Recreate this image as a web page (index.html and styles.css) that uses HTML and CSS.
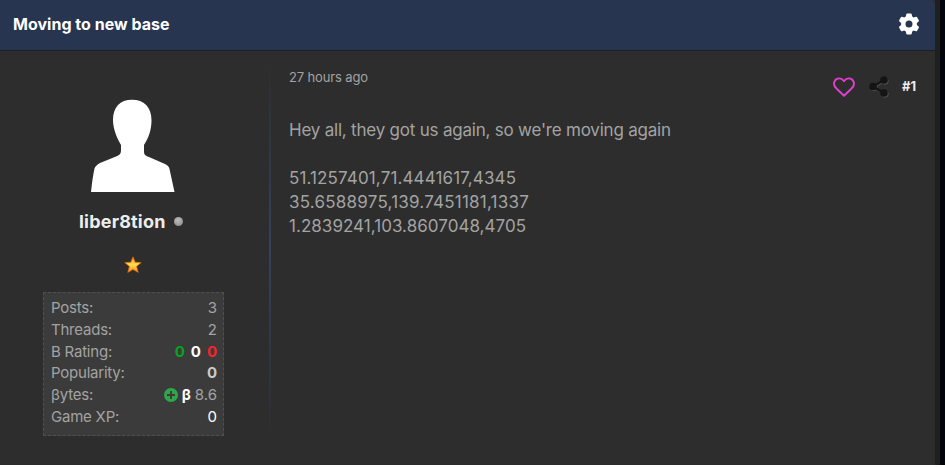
FILE: index.html
```html
<!DOCTYPE html>
<html lang="en">
<head>
<meta charset="utf-8">
<title>Moving to new base</title>
<link rel="stylesheet" href="styles.css">
</head>
<body>
<div class="page">
  <article class="thread">
    <header class="thread-head">
      <h1 class="title">Moving to new base</h1>
      <svg class="gear" viewBox="0 0 20 22" width="20" height="22"><path fill="#fff" fill-rule="evenodd" d="M7.3 1.2Q7.4.4 8.2.4h3.6q.8 0 .9.8l.5 2.3 1.5.9 2.2-.7q.8-.2 1.2.5l1.7 3q.4.7-.2 1.2L17.900 10v2l1.700 1.600q.6.5.2 1.200l-1.700 3q-.4.7-1.200.5l-2.200-.700-1.500.900-.500 2.300q-.1.800-.900.800H8.200q-.8 0-.9-.8l-.5-2.300-1.500-.900-2.200.700q-.8.200-1.200-.5l-1.700-3q-.4-.7.200-1.200L2.100 12v-2L.4 8.400Q-.2 7.900.2 7.200l1.700-3q.4-.7 1.200-.5l2.200.7 1.500-.9zM10 7.500a3.500 3.500 0 1 0 0 7 3.500 3.500 0 0 0 0-7z"/></svg>
    </header>
    <div class="post">
      <aside class="author">
        <svg class="avatar" viewBox="0 0 86 93" width="86" height="93"><path fill="#fff" d="M1 93C2 84 3 76 4.500 69.500Q5.500 66.500 10 64L26 57.500C30 56 31 54.500 31 51V46C27 39 23 30 23 21C23 8 30 .7 42 .7S61.500 8 61.500 21C61.500 31 58.500 39 54 46V53C54 56 56 57 59 58L75 65Q79 67 79.500 70L84.500 93z"/></svg>
        <div class="name-row"><strong class="name">liber8tion</strong><i class="status"></i></div>
        <svg class="star" viewBox="0 0 18 18" width="18" height="18">
          <defs><linearGradient id="gold" x2="0" y2="1"><stop offset=".1" stop-color="#ff9a18"/><stop offset=".5" stop-color="#ffe04a"/><stop offset="1" stop-color="#f98a1c"/></linearGradient></defs>
          <path fill="url(#gold)" stroke="#e8650f" stroke-width=".7" stroke-linejoin="round" d="M9 .8l2.200 5.500 6 .2-4.600 3.900L14.200 16.400l-5.200-3-5.200 3 1.600-6L.8 6.500l6-.2z"/>
        </svg>
        <dl class="stats">
          <div class="stat"><dt>Posts:</dt><dd>3</dd></div>
          <div class="stat"><dt>Threads:</dt><dd>2</dd></div>
          <div class="stat"><dt>B Rating:</dt><dd class="rating"><b class="good">0</b><b class="neutral">0</b><b class="bad">0</b></dd></div>
          <div class="stat"><dt>Popularity:</dt><dd><b class="pop">0</b></dd></div>
          <div class="stat"><dt>βytes:</dt><dd class="bytes"><svg viewBox="0 0 14 14" width="14" height="14"><circle cx="7" cy="7" r="7" fill="#30a64a"/><path d="M7 3v8M3 7h8" stroke="#3b3b3b" stroke-width="1.900"/></svg><b class="beta">β</b><span>8.6</span></dd></div>
          <div class="stat"><dt>Game XP:</dt><dd class="xp">0</dd></div>
        </dl>
      </aside>
      <div class="divider"></div>
      <section class="content">
        <div class="meta">
          <time class="time">27 hours ago</time>
          <div class="actions">
            <svg class="heart" viewBox="0 0 22 20" width="22" height="20"><path fill="none" stroke="#e23fd0" stroke-width="1.900" stroke-linejoin="round" d="M11 4.200C9 1.400 6.500 1 4.500 1.700C1.500 2.700.300 6 1.600 9C2.200 10.300 3 11 4 12l7 6.800L18 12c1-1 1.800-1.700 2.400-3C21.700 6 20.500 2.700 17.500 1.700C15.500 1 13 1.400 11 4.200z"/></svg>
            <svg class="share" viewBox="0 0 20 22" width="20" height="22">
              <g fill="#505050" stroke="#505050" transform="translate(.9 1)"><path fill="none" stroke-width="2" d="M15 4L4 10.500 15 17"/><circle cx="15" cy="4" r="3.300"/><circle cx="4" cy="10.500" r="3.300"/><circle cx="15" cy="17" r="3.300"/></g>
              <path fill="none" stroke="#141414" stroke-width="2.200" d="M15 4L4 10.500 15 17"/><g fill="#141414"><circle cx="15" cy="4" r="3.800"/><circle cx="4" cy="10.500" r="3.800"/><circle cx="15" cy="17" r="3.800"/></g>
            </svg>
            <strong class="number">#1</strong>
          </div>
        </div>
        <div class="message">
          <p><span class="greeting">Hey all, they got us again, so we're moving again</span></p>
          <p class="coords"><span class="c1">51.1257401,71.4441617,4345</span><br><span class="c2">35.6588975,139.7451181,1337</span><br><span class="c3">1.2839241,103.8607048,4705</span></p>
        </div>
      </section>
    </div>
  </article>
</div>
</body>
</html>
```

FILE: styles.css
```css
* { box-sizing: border-box; }
body { margin: 0; background: #fff; font-family: Inter, "Liberation Sans", sans-serif; color: #a3a3a3; }
svg { display: block; }
.page { height: 465px; background: #02060c; overflow: hidden; }
.thread { width: 940px; height: 465px; border-right: 5px solid #1f1f1f; background: #2d2d2d; }
.thread-head { height: 51px; padding: 0 16px 2px 13px; display: flex; align-items: center; justify-content: space-between; background: #283550; border-bottom: 1px solid #1c1e21; border-radius: 0 5px 0 0; }
.title { margin: 0; font-size: 16px; line-height: 24px; font-weight: 700; color: #fff; letter-spacing: .02px; }
.gear { margin-top: -1px; }
.post { height: 414px; display: flex; }
.author { width: 269px; padding-top: 48px; display: flex; flex-direction: column; }
.avatar { margin-left: 90px; }
.name-row { display: flex; align-items: center; height: 26px; margin: 17px 0 0 79px; gap: 8px; }
.name { font-size: 18px; line-height: 26px; color: #ededed; letter-spacing: .2px; }
.status { width: 9px; height: 9px; margin-top: -2px; border-radius: 50%; background: radial-gradient(circle at 45% 35%, #bcbcbc, #858585); }
.star { margin: 21px 0 0 124px; }
.stats { width: 181px; height: 144px; margin: 18px 0 0 43px; padding: 4px 6px 0 7px; background: #3b3b3b; border: 1px dashed #505050; font-size: 15px; }
.stat { display: flex; justify-content: space-between; align-items: center; height: 21.800px; line-height: 21.800px; }
dt, dd { margin: 0; }
dt { letter-spacing: -.22px; }
dd { display: flex; align-items: center; }
.rating { gap: 6px; }
.good { color: #07a31e; }
.neutral { color: #fff; }
.bad { color: #f8242c; }
.pop { color: #cacaca; }
.bytes { gap: 4px; }
.beta { color: #fff; }
.xp { color: #fff; }
.divider { width: 2px; height: 376px; margin-top: 10px; background: linear-gradient(#2d2d2d, #34425f 50%, #2d2d2d); }
.content { flex: 1; padding: 17px 18px 0 18px; }
.meta { display: flex; justify-content: space-between; height: 50px; }
.time { font-size: 13px; line-height: 20px; margin-top: -1px; letter-spacing: -.13px; }
.actions { display: flex; align-items: center; height: 22px; margin-top: 8px; }
.heart { margin-right: 14px; }
.share { margin-right: 13px; }
.number { font-size: 13px; line-height: 20px; margin: -2px 1px 0 0; color: #ededed; }
.message { font-size: 17px; line-height: 24px; }
.message p { margin: 0 0 24px; }
.greeting { letter-spacing: -.21px; }
.c1 { letter-spacing: .13px; }
.c2 { letter-spacing: .22px; }
.c3 { letter-spacing: .04px; }
```
